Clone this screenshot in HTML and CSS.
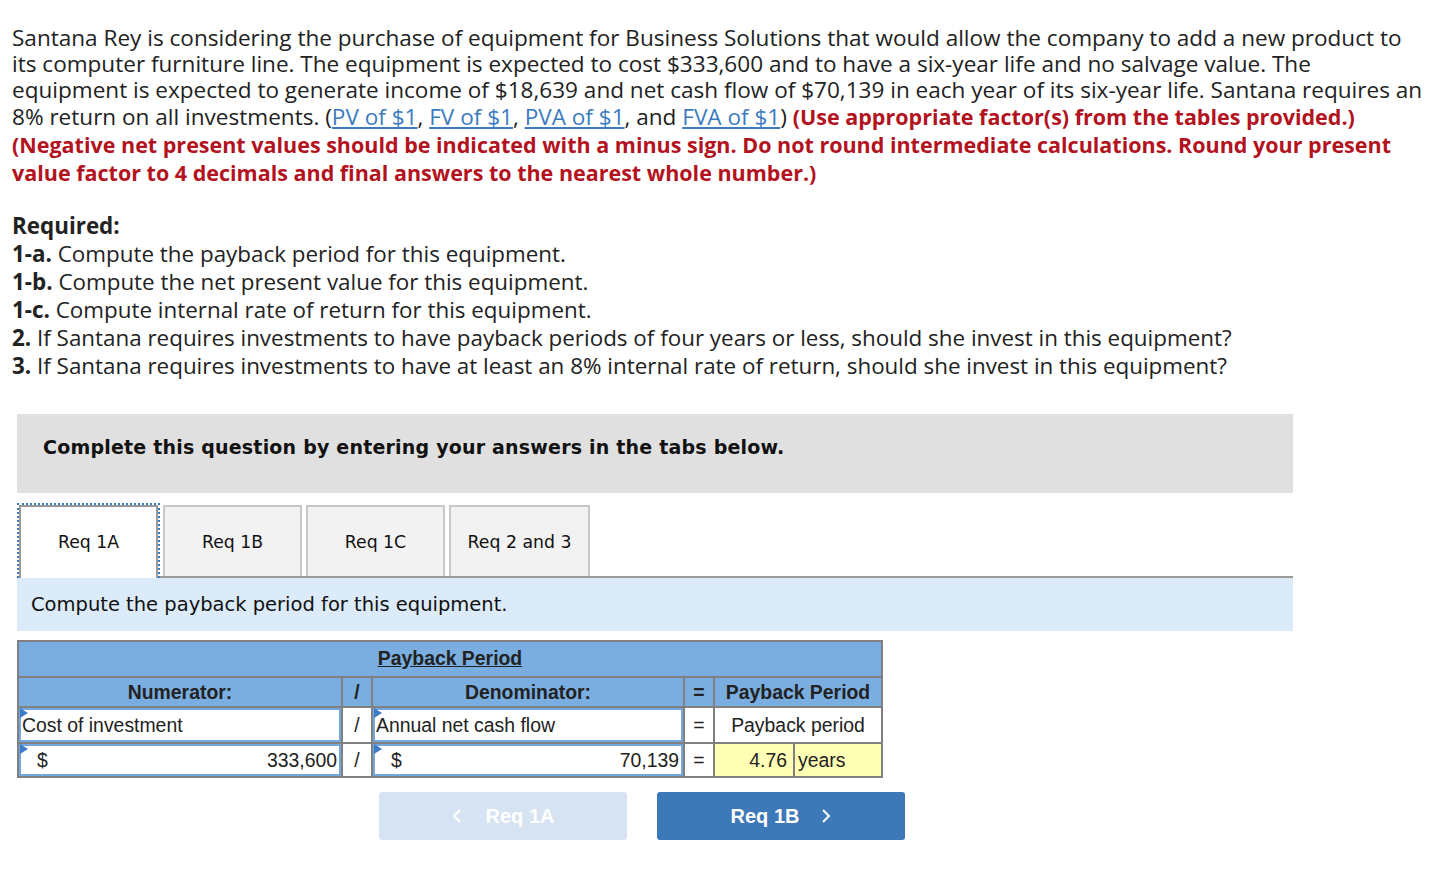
FILE: index.html
```html
<!DOCTYPE html>
<html>
<head>
<meta charset="utf-8">
<link rel="stylesheet" href="styles.css">
</head>
<body>
<div class="page">
  <p class="intro">Santana Rey is considering the purchase of equipment for Business Solutions that would allow the company to add a new product to its computer furniture line. The equipment is expected to cost $333,600 and to have a six-year life and no salvage value. The equipment is expected to generate income of $18,639 and net cash flow of $70,139 in each year of its six-year life. Santana requires an 8% return on all investments. (<a href="#">PV of $1</a>, <a href="#">FV of $1</a>, <a href="#">PVA of $1</a>, and <a href="#">FVA of $1</a>) <strong class="warn">(Use appropriate factor(s) from the tables provided.) (Negative net present values should be indicated with a minus sign. Do not round intermediate calculations. Round your present value factor to 4 decimals and final answers to the nearest whole number.)</strong></p>

  <div class="required">
    <div><b>Required:</b></div>
    <div><b>1-a.</b> Compute the payback period for this equipment.</div>
    <div><b>1-b.</b> Compute the net present value for this equipment.</div>
    <div><b>1-c.</b> Compute internal rate of return for this equipment.</div>
    <div><b>2.</b> If Santana requires investments to have payback periods of four years or less, should she invest in this equipment?</div>
    <div><b>3.</b> If Santana requires investments to have at least an 8% internal rate of return, should she invest in this equipment?</div>
  </div>

  <div class="quiz">
    <div class="instr">Complete this question by entering your answers in the tabs below.</div>

    <div class="tabs">
      <div class="tab active"><div class="tab-inner">Req 1A</div></div>
      <div class="tab"><div class="tab-inner">Req 1B</div></div>
      <div class="tab"><div class="tab-inner">Req 1C</div></div>
      <div class="tab last"><div class="tab-inner">Req 2 and 3</div></div>
    </div>

    <div class="panel-head">Compute the payback period for this equipment.</div>

    <div class="grid">
      <div class="c head title"><u>Payback Period</u></div>

      <div class="c head">Numerator:</div>
      <div class="c head">/</div>
      <div class="c head">Denominator:</div>
      <div class="c head">=</div>
      <div class="c head span2">Payback Period</div>

      <div class="c input left"><i class="flag"></i>Cost of investment</div>
      <div class="c op">/</div>
      <div class="c input left"><i class="flag"></i>Annual net cash flow</div>
      <div class="c op">=</div>
      <div class="c plain span2">Payback period</div>

      <div class="c input money"><i class="flag"></i><span class="cur">$</span><span class="num">333,600</span></div>
      <div class="c op">/</div>
      <div class="c input money"><i class="flag"></i><span class="cur">$</span><span class="num">70,139</span></div>
      <div class="c op">=</div>
      <div class="c result num-r">4.76</div>
      <div class="c result unit">years</div>
    </div>

    <div class="nav">
      <button class="btn disabled">
        <svg width="10" height="16" viewBox="0 0 10 16"><polyline points="8,2 2,8 8,14" fill="none" stroke="#fff" stroke-width="2"/></svg>
        <span>Req 1A</span>
      </button>
      <button class="btn primary">
        <span>Req 1B</span>
        <svg width="10" height="16" viewBox="0 0 10 16"><polyline points="2,2 8,8 2,14" fill="none" stroke="#fff" stroke-width="2"/></svg>
      </button>
    </div>
  </div>
</div>
</body>
</html>
```

FILE: styles.css
```css
html, body {
  margin: 0;
  padding: 0;
  background: #fff;
}

.page {
  padding: 25px 6px 40px 12px;
  font-family: "Open Sans", "Liberation Sans", sans-serif;
  color: #222;
}

.intro {
  margin: 0;
  font-size: 22.55px;
  line-height: 26px;
}

.intro a {
  color: #3b7bc0;
  text-decoration: underline;
}

.warn {
  color: #b3131e;
  font-weight: 700;
  font-size: 21.5px;
  line-height: 28px;
}

.required {
  margin-top: 25px;
  font-size: 22.4px;
  line-height: 28px;
}

.required b {
  font-weight: 700;
}

.quiz {
  margin-top: 34px;
  margin-left: 5px;
  width: 1276px;
  font-family: "DejaVu Sans", Verdana, sans-serif;
}

.instr {
  background: #e0e0e0;
  padding: 22px 26px 34px;
  font-size: 19px;
  letter-spacing: 0.2px;
  font-weight: 700;
  line-height: 23px;
  color: #111;
}

.tabs {
  display: flex;
  align-items: flex-end;
  margin-top: 10px;
  border-bottom: 2px solid #999;
  height: 73px;
}

.tab {
  width: 139px;
  height: 71px;
  margin-right: 4px;
  box-sizing: border-box;
  background: #f2f2f2;
  border: 2px solid #c8c8c8;
  border-bottom: none;
  font-size: 17.3px;
  color: #111;
}

.tab.last {
  width: 141px;
}

.tab-inner {
  height: 100%;
  display: flex;
  align-items: center;
  justify-content: center;
}

.tab.active {
  width: 143px;
  height: 75px;
  margin-bottom: -2px;
  margin-right: 3px;
  background: transparent;
  border: 2px dotted #3c78c8;
  border-bottom: none;
}

.tab.active .tab-inner {
  background: #fff;
  border: 2px solid #999;
  border-bottom: none;
  box-sizing: border-box;
  padding-bottom: 2px;
}

.panel-head {
  background: #dbebf9;
  height: 53px;
  padding-left: 14px;
  display: flex;
  align-items: center;
  font-size: 19.5px;
  color: #111;
}

.grid {
  margin-top: 9px;
  display: grid;
  grid-template-columns: 322px 28px 310px 28px 78px 86px;
  grid-template-rows: 34px 28px 34px 32px;
  gap: 2px;
  padding: 2px;
  background: #808080;
  width: max-content;
  font-family: "Liberation Sans", Arial, sans-serif;
  font-size: 19.4px;
  color: #222;
}

.c {
  display: flex;
  align-items: center;
  justify-content: center;
  background: #fff;
  position: relative;
  white-space: nowrap;
}

.head {
  background: #7aaee0;
  font-weight: 700;
}

.title {
  grid-column: 1 / span 6;
  align-items: flex-start;
  padding-top: 5px;
}

.span2 {
  grid-column: span 2;
}

.input {
  box-shadow: inset 0 0 0 2px #74a7de;
}

.left {
  justify-content: flex-start;
  padding-left: 3px;
}

.money {
  justify-content: space-between;
  padding: 0 4px 0 18px;
}

.flag {
  position: absolute;
  left: 1px;
  top: 0;
  width: 0;
  height: 0;
  border-left: 8px solid #3c7cc9;
  border-top: 5px solid transparent;
  border-bottom: 5px solid transparent;
}

.result {
  background: #ffffb5;
}

.num-r {
  justify-content: flex-end;
  padding-right: 6px;
}

.unit {
  justify-content: flex-start;
  padding-left: 3px;
}

.nav {
  display: flex;
  gap: 30px;
  margin-top: 14px;
  padding-left: 362px;
}

.btn {
  width: 248px;
  height: 48px;
  border: none;
  border-radius: 3px;
  display: flex;
  align-items: center;
  justify-content: center;
  font-family: "Liberation Sans", Arial, sans-serif;
  font-size: 20px;
  font-weight: 700;
  color: #fff;
  padding: 0;
}

.btn.disabled {
  background: #d6e3f2;
  gap: 24px;
}

.btn.primary {
  background: #3d78b8;
  gap: 22px;
}
```
